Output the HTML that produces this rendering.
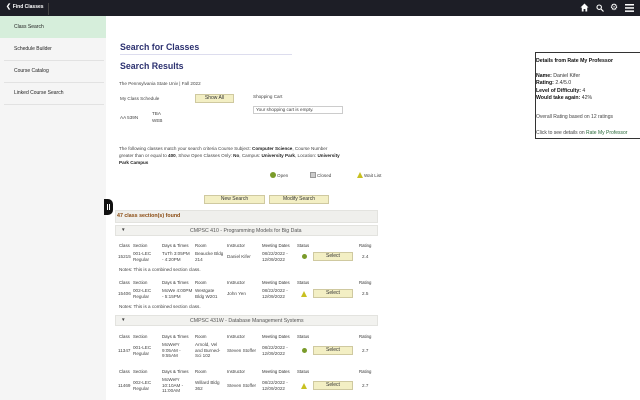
<!DOCTYPE html>
<html><head><meta charset="utf-8"><style>
*{margin:0;padding:0;box-sizing:border-box}
body{width:640px;height:400px;overflow:hidden;background:#fff;font-family:"Liberation Sans",sans-serif;position:relative;color:#333}
.a{position:absolute;white-space:nowrap}
.t{font-size:4.6px;color:#444;line-height:5.5px}
.b{font-weight:bold;color:#222}
.btn{position:absolute;background:#f3efc4;border:1px solid #cfc9a0;font-size:5px;text-align:center;color:#333}
.h{font-size:4.3px;color:#333}
.bar{position:absolute;background:#f2f2ef;border:1px solid #e3e3df}
</style></head><body>
<div class="a" style="left:0;top:0;width:640px;height:16px;background:#1d1e26"></div>
<div class="a" style="left:48px;top:3px;width:1px;height:12px;background:#444"></div>
<div class="a" style="left:6px;top:3px;color:#fff;font-size:6px;font-weight:bold">&#10094; <span style="font-size:5px">Find Classes</span></div>
<svg class="a" style="left:580px;top:3px" width="9" height="9" viewBox="0 0 9 9"><path d="M4.5 0.5 L0.5 4.5 L1.8 4.5 L1.8 8.5 L3.6 8.5 L3.6 6 L5.4 6 L5.4 8.5 L7.2 8.5 L7.2 4.5 L8.5 4.5 Z" fill="#fff"/></svg>
<svg class="a" style="left:596px;top:4px" width="8" height="8" viewBox="0 0 8 8"><circle cx="3.2" cy="3.2" r="2.2" stroke="#fff" stroke-width="1.1" fill="none"/><line x1="5" y1="5" x2="7.5" y2="7.5" stroke="#fff" stroke-width="1.2"/></svg>
<div class="a" style="left:610px;top:2px;color:#fff;font-size:9px">&#9881;</div>
<svg class="a" style="left:625px;top:4px" width="9" height="8"><rect y="0" width="9" height="1.5" fill="#fff"/><rect y="3.2" width="9" height="1.5" fill="#fff"/><rect y="6.4" width="9" height="1.5" fill="#fff"/></svg>

<div class="a" style="left:0;top:16px;width:106px;height:384px;background:#f5f5f5"></div>
<div class="a" style="left:0;top:16px;width:106px;height:22px;background:#d6eedb"></div>
<div class="a t" style="left:14px;top:25px;color:#222;font-size:5px">Class Search</div>
<div class="a t" style="left:14px;top:47px;color:#222;font-size:5px">Schedule Builder</div>
<div class="a" style="left:4px;top:60px;width:100px;height:1px;background:#e2e2e2"></div>
<div class="a t" style="left:14px;top:69px;color:#222;font-size:5px">Course Catalog</div>
<div class="a" style="left:4px;top:82px;width:100px;height:1px;background:#e2e2e2"></div>
<div class="a t" style="left:14px;top:91px;color:#222;font-size:5px">Linked Course Search</div>
<div class="a" style="left:4px;top:104px;width:100px;height:1px;background:#e2e2e2"></div>

<div class="a" style="left:120px;top:42px;font-size:8.8px;font-weight:bold;color:#2c3170">Search for Classes</div>
<div class="a" style="left:120px;top:54px;width:172px;height:1px;background:#dde"></div>
<div class="a" style="left:120px;top:61px;font-size:8.8px;font-weight:bold;color:#2c3170">Search Results</div>
<div class="a t" style="left:119px;top:81px">The Pennsylvania State Univ | Fall 2022</div>
<div class="a t" style="left:120px;top:96px">My Class Schedule</div>
<div class="btn" style="left:195px;top:94px;width:39px;height:9px;line-height:7px">Show All</div>
<div class="a t" style="left:253px;top:94px">Shopping Cart</div>
<div class="a t" style="left:253px;top:106px;width:90px;height:8px;border:1px solid #ccc;padding-left:2px">Your shopping cart is empty.</div>
<div class="a t" style="left:120px;top:115px">AA 539N</div>
<div class="a t" style="left:152px;top:111px">TBA</div>
<div class="a t" style="left:152px;top:118px">WEB</div>
<div class="a t" style="left:119px;top:145px;line-height:7.2px;white-space:normal;width:224px">The following classes match your search criteria Course Subject: <b class="b">Computer Science</b>, Course Number greater than or equal to <b class="b">400</b>, Show Open Classes Only: <b class="b">No</b>, Campus: <b class="b">University Park</b>, Location: <b class="b">University Park Campus</b></div>
<div class="a" style="left:270px;top:172px;width:6px;height:6px;border-radius:50%;background:#7a9b2a"></div><div class="a t" style="left:277px;top:173px">Open</div>
<div class="a" style="left:310px;top:172px;width:6px;height:6px;background:#ccc;border:1px solid #999"></div><div class="a t" style="left:317px;top:173px">Closed</div>
<div class="a" style="left:357px;top:172px;width:0;height:0;border-left:3px solid transparent;border-right:3px solid transparent;border-bottom:6px solid #c8c020"></div><div class="a t" style="left:364px;top:173px">Wait List</div>
<div class="btn" style="left:204px;top:195px;width:61px;height:9px;line-height:7px">New Search</div>
<div class="btn" style="left:269px;top:195px;width:60px;height:9px;line-height:7px">Modify Search</div>
<div class="a" style="left:104px;top:199px;width:9px;height:16px;background:#111;border-radius:0 5px 5px 0"></div>
<div class="a" style="left:107px;top:204px;width:1px;height:6px;background:#fff"></div><div class="a" style="left:109px;top:204px;width:1px;height:6px;background:#fff"></div>
<div class="bar" style="left:115px;top:210px;width:263px;height:13px;background:#efefec"></div>
<div class="a" style="left:117px;top:213px;font-size:5.3px;font-weight:bold;color:#8a4a10">47 class section(s) found</div>
<div class="bar" style="left:115px;top:225px;width:263px;height:11px"></div>
<div class="a t" style="left:121px;top:227px">&#9660;</div>
<div class="a" style="left:190px;top:228px;font-size:5.2px;color:#555">CMPSC 410 - Programming Models for Big Data</div>

<div class="a h" style="left:119px;top:243px">Class</div><div class="a h" style="left:133px;top:243px">Section</div><div class="a h" style="left:162px;top:243px">Days &amp; Times</div><div class="a h" style="left:195px;top:243px">Room</div><div class="a h" style="left:227px;top:243px">Instructor</div><div class="a h" style="left:262px;top:243px">Meeting Dates</div><div class="a h" style="left:297px;top:243px">Status</div><div class="a h" style="left:359px;top:243px">Rating</div>
<div class="a t" style="left:118px;top:254px">15215</div><div class="a t" style="left:133px;top:251px">001-LEC<br>Regular</div><div class="a t" style="left:162px;top:251px">TuTh 3:05PM<br>- 4:20PM</div><div class="a t" style="left:195px;top:251px">Beaucke Bldg<br>214</div><div class="a t" style="left:227px;top:254px">Daniel Kifer</div><div class="a t" style="left:262px;top:251px">08/22/2022 -<br>12/09/2022</div>
<div class="a" style="left:302px;top:254px;width:5px;height:5px;border-radius:50%;background:#7a9b2a"></div>
<div class="btn" style="left:313px;top:252px;width:40px;height:9px;line-height:7px">Select</div><div class="a t" style="left:362px;top:254px">2.4</div>
<div class="a t" style="left:119px;top:267px">Notes: This is a combined section class.</div>

<div class="a h" style="left:119px;top:280px">Class</div><div class="a h" style="left:133px;top:280px">Section</div><div class="a h" style="left:162px;top:280px">Days &amp; Times</div><div class="a h" style="left:195px;top:280px">Room</div><div class="a h" style="left:227px;top:280px">Instructor</div><div class="a h" style="left:262px;top:280px">Meeting Dates</div><div class="a h" style="left:297px;top:280px">Status</div><div class="a h" style="left:359px;top:280px">Rating</div>
<div class="a t" style="left:118px;top:291px">15406</div><div class="a t" style="left:133px;top:288px">002-LEC<br>Regular</div><div class="a t" style="left:162px;top:288px">MoWe 4:00PM<br>- 5:15PM</div><div class="a t" style="left:195px;top:288px">Westgate<br>Bldg W201</div><div class="a t" style="left:227px;top:291px">John Yen</div><div class="a t" style="left:262px;top:288px">08/22/2022 -<br>12/09/2022</div>
<div class="a" style="left:301px;top:291px;border-left:3px solid transparent;border-right:3px solid transparent;border-bottom:6px solid #c8c020"></div>
<div class="btn" style="left:313px;top:289px;width:40px;height:9px;line-height:7px">Select</div><div class="a t" style="left:362px;top:291px">2.5</div>
<div class="a t" style="left:119px;top:304px">Notes: This is a combined section class.</div>

<div class="bar" style="left:115px;top:315px;width:263px;height:11px"></div>
<div class="a t" style="left:121px;top:317px">&#9660;</div>
<div class="a" style="left:190px;top:318px;font-size:5.2px;color:#555">CMPSC 431W - Database Management Systems</div>

<div class="a h" style="left:119px;top:334px">Class</div><div class="a h" style="left:133px;top:334px">Section</div><div class="a h" style="left:162px;top:334px">Days &amp; Times</div><div class="a h" style="left:195px;top:334px">Room</div><div class="a h" style="left:227px;top:334px">Instructor</div><div class="a h" style="left:262px;top:334px">Meeting Dates</div><div class="a h" style="left:297px;top:334px">Status</div><div class="a h" style="left:359px;top:334px">Rating</div>
<div class="a t" style="left:118px;top:348px">11347</div><div class="a t" style="left:133px;top:345px">001-LEC<br>Regular</div><div class="a t" style="left:162px;top:342px">MoWeFr<br>9:05AM -<br>9:55AM</div><div class="a t" style="left:195px;top:342px">Arnold, Vel<br>and Burned-<br>Sci 102</div><div class="a t" style="left:227px;top:348px">Steven Stoffer</div><div class="a t" style="left:262px;top:345px">08/22/2022 -<br>12/09/2022</div>
<div class="a" style="left:302px;top:348px;width:5px;height:5px;border-radius:50%;background:#7a9b2a"></div>
<div class="btn" style="left:313px;top:346px;width:40px;height:9px;line-height:7px">Select</div><div class="a t" style="left:362px;top:348px">2.7</div>

<div class="a h" style="left:119px;top:369px">Class</div><div class="a h" style="left:133px;top:369px">Section</div><div class="a h" style="left:162px;top:369px">Days &amp; Times</div><div class="a h" style="left:195px;top:369px">Room</div><div class="a h" style="left:227px;top:369px">Instructor</div><div class="a h" style="left:262px;top:369px">Meeting Dates</div><div class="a h" style="left:297px;top:369px">Status</div><div class="a h" style="left:359px;top:369px">Rating</div>
<div class="a t" style="left:118px;top:383px">11469</div><div class="a t" style="left:133px;top:380px">002-LEC<br>Regular</div><div class="a t" style="left:162px;top:377px">MoWeFr<br>10:10AM -<br>11:00AM</div><div class="a t" style="left:195px;top:380px">Willard Bldg<br>362</div><div class="a t" style="left:227px;top:383px">Steven Stoffer</div><div class="a t" style="left:262px;top:380px">08/22/2022 -<br>12/09/2022</div>
<div class="a" style="left:301px;top:383px;border-left:3px solid transparent;border-right:3px solid transparent;border-bottom:6px solid #c8c020"></div>
<div class="btn" style="left:313px;top:381px;width:40px;height:9px;line-height:7px">Select</div><div class="a t" style="left:362px;top:383px">2.7</div>

<div class="a" style="left:535px;top:52px;width:105px;height:87px;border:1px solid #333;border-right:none;background:#fff"></div>
<div class="a" style="left:536px;top:58px;font-size:5.2px;font-weight:bold;color:#111">Details from Rate My Professor</div>
<div class="a" style="left:536px;top:73px;font-size:5.2px;line-height:7.3px;color:#333"><b style="color:#111">Name:</b> Daniel Kifer<br><b style="color:#111">Rating:</b> 2.4/5.0<br><b style="color:#111">Level of Difficulty:</b> 4<br><b style="color:#111">Would take again:</b> 42%</div>
<div class="a" style="left:536px;top:114px;font-size:5px;color:#444">Overall Rating based on 12 ratings</div>
<div class="a" style="left:536px;top:130px;font-size:5px;color:#444">Click to see details on <span style="color:#2a6a3a">Rate My Professor</span></div>
</body></html>
